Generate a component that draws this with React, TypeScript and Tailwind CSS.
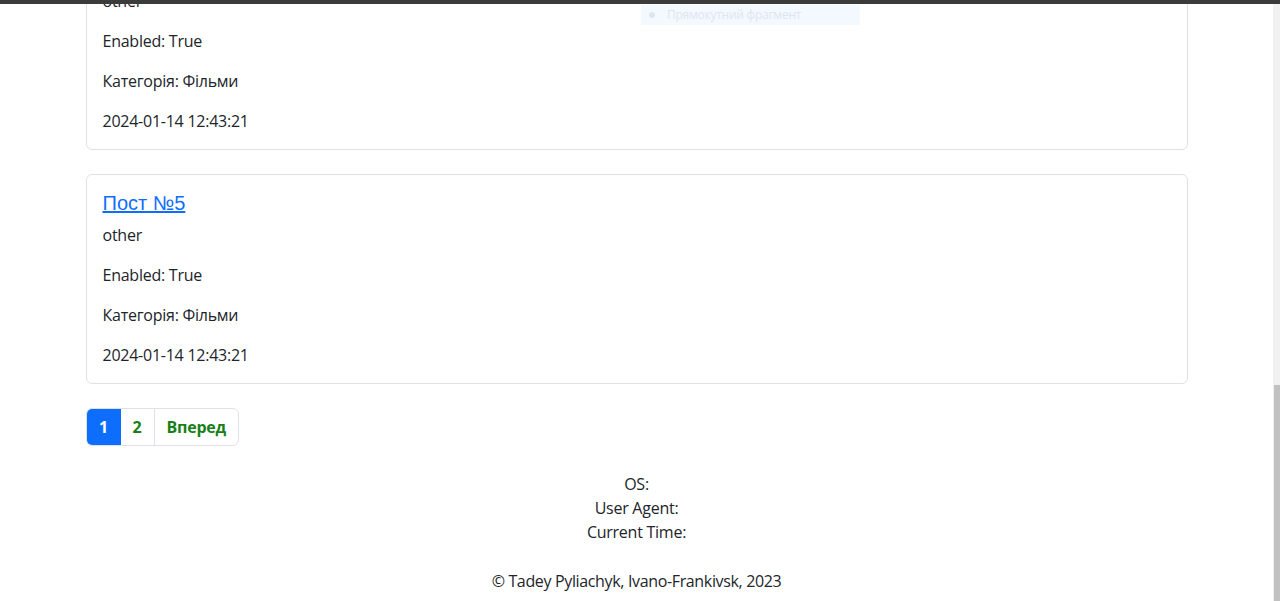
const posts = [
  { id: 4, title: 'Пост №4', body: 'other', enabled: 'True', category: 'Фільми', date: '2024-01-14 12:43:21' },
  { id: 5, title: 'Пост №5', body: 'other', enabled: 'True', category: 'Фільми', date: '2024-01-14 12:43:21' },
]

function PostCard({ post }: { post: (typeof posts)[number] }) {
  return (
    <div className="rounded-[6px] border border-[#dee2e6] p-4">
      <a
        href="#"
        className="mb-2 block font-['Liberation_Sans',Arial,sans-serif] text-[20px] leading-[24px] tracking-normal text-[#0d6efd] underline"
      >
        {post.title}
      </a>
      <p className="mb-4 leading-6">{post.body}</p>
      <p className="mb-4 leading-6">Enabled: {post.enabled}</p>
      <p className="mb-4 leading-6">Категорія: {post.category}</p>
      <p className="leading-6">{post.date}</p>
    </div>
  )
}

function Pagination() {
  return (
    <div className="flex h-[38px] w-fit overflow-hidden rounded-[6px] border border-[#dee2e6] font-bold text-[#198019]">
      <a href="#" className="flex w-[34px] items-center justify-center bg-[#0d6efd] text-white">
        1
      </a>
      <a href="#" className="flex w-[34px] items-center justify-center border-r border-[#dee2e6]">
        2
      </a>
      <a href="#" className="flex items-center px-3">
        Вперед
      </a>
    </div>
  )
}

export default function App() {
  return (
    <div className="flex h-[601px] flex-col overflow-hidden bg-white font-['Open_Sans','Noto_Sans',sans-serif] text-[16px] tracking-[-0.25px] text-[#212529]">
      <div className="h-[4px] shrink-0 bg-[#3b3b3b]" />
      <div className="relative flex flex-1 overflow-hidden">
        <div className="flex-1">
          <div className="mx-auto -mt-[64px] w-[1102px]">
            <div className="flex flex-col gap-6">
              {posts.map((post) => (
                <PostCard key={post.id} post={post} />
              ))}
            </div>
            <div className="mt-6">
              <Pagination />
            </div>
          </div>
          <footer className="mt-[26px] text-center leading-6">
            <div>OS:</div>
            <div>User Agent:</div>
            <div>Current Time:</div>
            <p className="mt-[25px] tracking-[-0.35px]">© Tadey Pyliachyk, Ivano-Frankivsk, 2023</p>
          </footer>
        </div>
        <div className="flex w-[7px] shrink-0 flex-col bg-[#f1f1f1]">
          <div className="flex-1" />
          <div className="ml-[1px] h-[216px] bg-[#c1c1c1]" />
        </div>
        <div className="absolute left-[641px] top-[1px] flex h-[20px] w-[219px] items-center gap-3 bg-[#f3f9ff] px-2 text-[12px] text-[#dfe6ee]">
          <span className="h-[6px] w-[6px] rounded-full bg-[#dfe6ee]" />
          <span>Прямокутний фрагмент</span>
        </div>
      </div>
    </div>
  )
}
